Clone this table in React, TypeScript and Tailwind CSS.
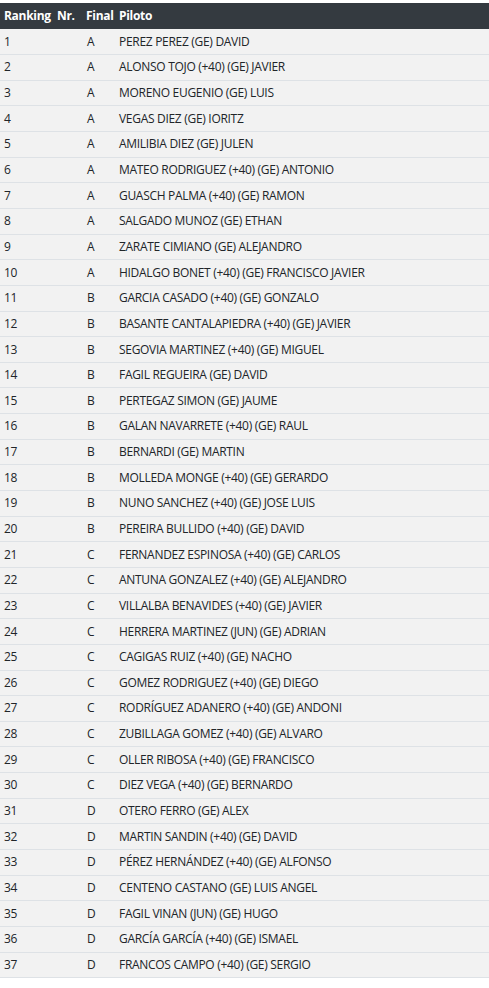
const rows: [number, string, string][] = [
  [1, "A", "PEREZ PEREZ (GE) DAVID"],
  [2, "A", "ALONSO TOJO (+40) (GE) JAVIER"],
  [3, "A", "MORENO EUGENIO (GE) LUIS"],
  [4, "A", "VEGAS DIEZ (GE) IORITZ"],
  [5, "A", "AMILIBIA DIEZ (GE) JULEN"],
  [6, "A", "MATEO RODRIGUEZ (+40) (GE) ANTONIO"],
  [7, "A", "GUASCH PALMA (+40) (GE) RAMON"],
  [8, "A", "SALGADO MUNOZ (GE) ETHAN"],
  [9, "A", "ZARATE CIMIANO (GE) ALEJANDRO"],
  [10, "A", "HIDALGO BONET (+40) (GE) FRANCISCO JAVIER"],
  [11, "B", "GARCIA CASADO (+40) (GE) GONZALO"],
  [12, "B", "BASANTE CANTALAPIEDRA (+40) (GE) JAVIER"],
  [13, "B", "SEGOVIA MARTINEZ (+40) (GE) MIGUEL"],
  [14, "B", "FAGIL REGUEIRA (GE) DAVID"],
  [15, "B", "PERTEGAZ SIMON (GE) JAUME"],
  [16, "B", "GALAN NAVARRETE (+40) (GE) RAUL"],
  [17, "B", "BERNARDI (GE) MARTIN"],
  [18, "B", "MOLLEDA MONGE (+40) (GE) GERARDO"],
  [19, "B", "NUNO SANCHEZ (+40) (GE) JOSE LUIS"],
  [20, "B", "PEREIRA BULLIDO (+40) (GE) DAVID"],
  [21, "C", "FERNANDEZ ESPINOSA (+40) (GE) CARLOS"],
  [22, "C", "ANTUNA GONZALEZ (+40) (GE) ALEJANDRO"],
  [23, "C", "VILLALBA BENAVIDES (+40) (GE) JAVIER"],
  [24, "C", "HERRERA MARTINEZ (JUN) (GE) ADRIAN"],
  [25, "C", "CAGIGAS RUIZ (+40) (GE) NACHO"],
  [26, "C", "GOMEZ RODRIGUEZ (+40) (GE) DIEGO"],
  [27, "C", "RODRÍGUEZ ADANERO (+40) (GE) ANDONI"],
  [28, "C", "ZUBILLAGA GOMEZ (+40) (GE) ALVARO"],
  [29, "C", "OLLER RIBOSA (+40) (GE) FRANCISCO"],
  [30, "C", "DIEZ VEGA (+40) (GE) BERNARDO"],
  [31, "D", "OTERO FERRO (GE) ALEX"],
  [32, "D", "MARTIN SANDIN (+40) (GE) DAVID"],
  [33, "D", "PÉREZ HERNÁNDEZ (+40) (GE) ALFONSO"],
  [34, "D", "CENTENO CASTANO (GE) LUIS ANGEL"],
  [35, "D", "FAGIL VINAN (JUN) (GE) HUGO"],
  [36, "D", "GARCÍA GARCÍA (+40) (GE) ISMAEL"],
  [37, "D", "FRANCOS CAMPO (+40) (GE) SERGIO"],
];

export default function App() {
  return (
    <div className="pt-[3px] bg-white min-h-screen" style={{ fontFamily: '"Open Sans", sans-serif' }}>
      <table className="w-full border-collapse text-[12px] tracking-[-0.3px] text-[#212529]">
        <thead>
          <tr className="h-[26px] bg-[#343a40] text-white text-left">
            <th className="w-[54px] pl-[4px] font-bold">Ranking</th>
            <th className="w-[32px] pl-[3px] font-bold">Nr.</th>
            <th className="w-[33px] pl-0 font-bold">Final</th>
            <th className="pl-0 font-bold">Piloto</th>
          </tr>
        </thead>
        <tbody>
          {rows.map(([rank, fin, name]) => (
            <tr key={rank} className="h-[25.65px] bg-[#f2f2f2] border-b border-[#dee2e6]">
              <td className="pl-[4px]">{rank}</td>
              <td></td>
              <td className="pl-[1px]">{fin}</td>
              <td>{name}</td>
            </tr>
          ))}
        </tbody>
      </table>
    </div>
  );
}
